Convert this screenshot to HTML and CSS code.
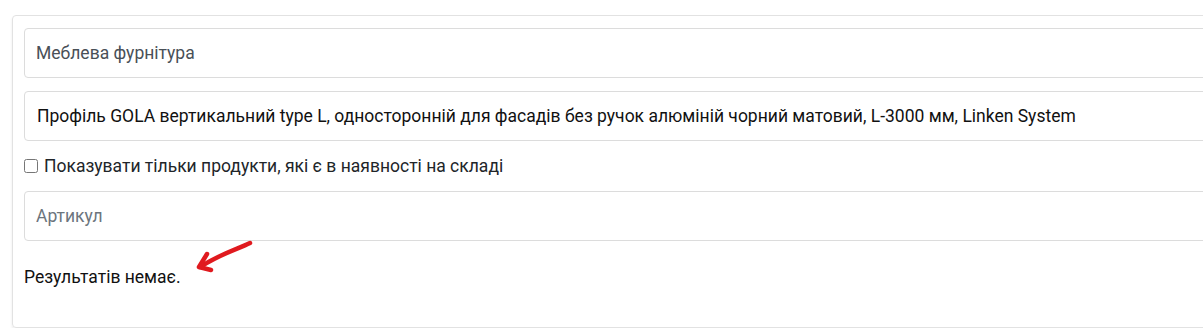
FILE: index.html
```html
<!DOCTYPE html>
<html lang="uk">
<head>
	<meta charset="UTF-8">
	<title>Пошук продуктів</title>
	<link rel="stylesheet" href="styles.css">
</head>
<body>
	<div class="card">
		<div class="field field_select">Меблева фурнітура</div>
		<div class="field field_product">Профіль GOLA вертикальний type L, односторонній для фасадів без ручок алюміній чорний матовий, L-3000 мм, Linken System</div>
		<label class="stock">
			<input type="checkbox">
			<span>Показувати тільки продукти, які є в наявності на складі</span>
		</label>
		<input class="field field_sku" type="text" placeholder="Артикул">
		<p class="empty">
			Результатів немає.
			<svg class="arrow" width="64" height="36" viewBox="0 0 64 36">
				<path d="M58 4 C46 10 30 14 8 28" />
				<path d="M15 15 L7 28 L19 31" />
			</svg>
		</p>
	</div>
</body>
</html>
```

FILE: styles.css
```css
body,div,p,label{margin:0;padding:0}

html,body{
	overflow: hidden;
}
body{
	background-color: #fff;
	font-family: Roboto, "Liberation Sans", sans-serif;
	font-size: 17.5px;
	color: #212529;
	padding: 15px 0 0 12px;
}

.card{
	width: 1220px;
	padding: 12px 11px 40px 11px;
	border: 1px solid #e2e2e2;
	border-radius: 4px;
	box-shadow: 0 2px 3px rgba(0,0,0,0.08);
	display: flex;
	flex-direction: column;
}

.field{
	box-sizing: border-box;
	height: 50px;
	width: 100%;
	padding: 0 11px;
	border: 1px solid #dcdcdc;
	border-radius: 4px;
	display: flex;
	align-items: center;
	font-family: inherit;
	font-size: 17.5px;
	color: #495057;
	background: #fff;
}
.field_product{
	margin-top: 13px;
	padding-left: 12px;
	color: #111;
}
.field_sku{
	outline: none;
}
.field_sku::placeholder{
	color: #6c757d;
}

.stock{
	display: flex;
	align-items: center;
	gap: 6px;
	height: 50px;
	color: #212529;
}
.stock input{
	margin: 0;
	width: 14px;
	height: 14px;
}

.empty{
	position: relative;
	margin-top: 26px;
	color: #111;
}
.arrow{
	position: absolute;
	left: 168px;
	top: -28px;
	fill: none;
	stroke: #e01a1f;
	stroke-width: 4.5;
	stroke-linecap: round;
	stroke-linejoin: round;
}
```
